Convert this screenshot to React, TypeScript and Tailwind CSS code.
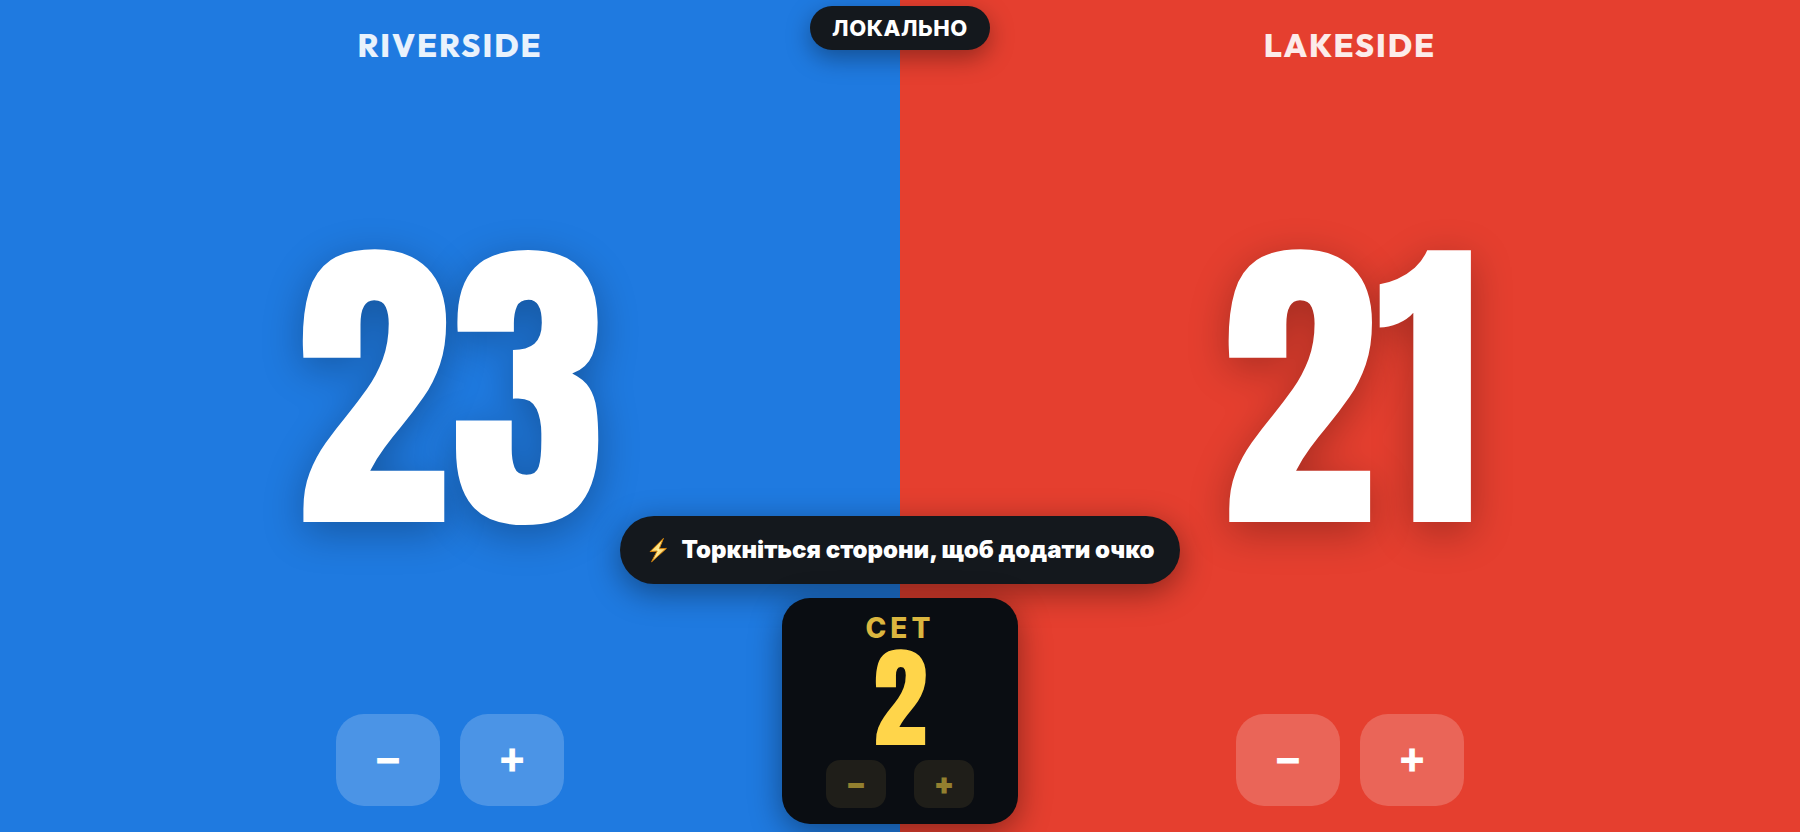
import { useState } from 'react';

type Team = { name: string; score: number };

function Side({ team, color, onChange }: { team: Team; color: string; onChange: (step: number) => void }) {
  const button =
    "flex h-[92px] w-[104px] items-center justify-center rounded-[28px] bg-white/20 pb-0.5 font-['Outfit',sans-serif] text-[48px] leading-none font-semibold text-white";

  return (
    <section className={`flex flex-col items-center justify-between pt-[29px] pb-[26px] ${color}`}>
      <h2 className="font-['Outfit',sans-serif] text-[32px] leading-8 font-extrabold tracking-[2px] text-white/90 uppercase">
        {team.name}
      </h2>
      <p className="font-['Anton',sans-serif] text-[316px] leading-none text-white [text-shadow:0_10px_40px_rgba(0,0,0,0.28)]">
        {team.score}
      </p>
      <div className="flex gap-5">
        <button type="button" aria-label={`${team.name} −1`} className={button} onClick={() => onChange(-1)}>
          −
        </button>
        <button type="button" aria-label={`${team.name} +1`} className={button} onClick={() => onChange(1)}>
          +
        </button>
      </div>
    </section>
  );
}

function Bolt() {
  return (
    <svg viewBox="0 0 24 26" className="h-[26px] w-6" aria-hidden="true">
      <defs>
        <linearGradient id="bolt" x1="0" y1="0" x2="1" y2="1">
          <stop offset="0" stopColor="#f9a60c" />
          <stop offset="0.5" stopColor="#fff3a0" />
          <stop offset="1" stopColor="#f58a07" />
        </linearGradient>
      </defs>
      <path
        d="M17.4 1.4 4.2 14.6l7-.6-5.6 10.8L20.4 11.4l-7.2.4z"
        fill="url(#bolt)"
        stroke="#d9860a"
        strokeWidth="1"
        strokeLinejoin="round"
      />
    </svg>
  );
}

export default function App() {
  const [home, setHome] = useState(23);
  const [away, setAway] = useState(21);
  const [set, setSet] = useState(2);

  const setButton =
    "flex h-12 w-[60px] items-center justify-center rounded-[14px] bg-[#1f1e19] font-['Outfit',sans-serif] text-[32px] leading-none font-black text-[#93802f]";

  return (
    <main className="relative grid min-h-screen grid-cols-2 font-['Inter',sans-serif]">
      <Side
        team={{ name: 'Riverside', score: home }}
        color="bg-[#1f7ae0]"
        onChange={(step) => setHome(Math.max(0, home + step))}
      />
      <Side
        team={{ name: 'Lakeside', score: away }}
        color="bg-[#e53f2f]"
        onChange={(step) => setAway(Math.max(0, away + step))}
      />

      <div className="pointer-events-none absolute inset-0 flex flex-col items-center justify-between pt-[6px] pb-2">
        <div className="flex h-11 items-center rounded-full bg-[#14181d] px-[22px] text-[22px] font-extrabold tracking-wide text-white shadow-[0_8px_24px_rgba(0,0,0,0.35)]">
          ЛОКАЛЬНО
        </div>

        <div className="flex flex-col items-center gap-[14px]">
          <div
            role="status"
            className="flex h-[68px] items-center gap-3 rounded-full bg-[#14181d] px-[26px] text-2xl font-black whitespace-nowrap text-white shadow-[0_8px_32px_rgba(0,0,0,0.4)]"
          >
            <Bolt />
            Торкніться сторони, щоб додати очко
          </div>

          <div className="pointer-events-auto flex w-[236px] flex-col items-center rounded-[28px] bg-[#0a0d12] py-4 shadow-[0_8px_32px_rgba(0,0,0,0.4)]">
            <span className="text-[28px] leading-7 font-extrabold tracking-[4px] text-[#dbb63f]">СЕТ</span>
            <span className="pb-1 font-['Anton',sans-serif] text-[110px] leading-[114px] text-[#ffd54a]">{set}</span>
            <div className="flex gap-7">
              <button type="button" aria-label="Сет −1" className={setButton} onClick={() => setSet(Math.max(1, set - 1))}>
                −
              </button>
              <button type="button" aria-label="Сет +1" className={setButton} onClick={() => setSet(set + 1)}>
                +
              </button>
            </div>
          </div>
        </div>
      </div>
    </main>
  );
}
